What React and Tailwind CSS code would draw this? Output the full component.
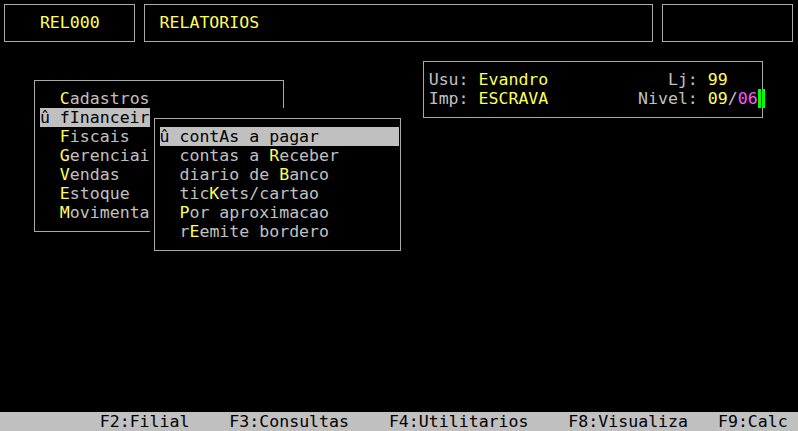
const Y = "text-[#ffff55]";

export default function App() {
  return (
    <div className="w-full h-screen bg-black overflow-hidden font-['DejaVu_Sans_Mono',monospace] text-[16.57px] leading-[19px] text-[#c0c0c0]">
      <div className="grid grid-cols-[repeat(80,9.975px)] grid-rows-[repeat(23,19px)] -mt-[6px] whitespace-pre">
        {/* header boxes */}
        <div className="col-start-1 col-span-14 row-start-1 row-span-3 ml-[4px] mr-[5px] mt-[10px] mb-[9px] border border-[#aaaaaa]" />
        <div className="col-start-15 col-span-52 row-start-1 row-span-3 ml-[4px] mr-[5px] mt-[10px] mb-[9px] border border-[#aaaaaa]" />
        <div className="col-start-67 col-span-14 row-start-1 row-span-3 ml-[4px] mr-[5px] mt-[10px] mb-[9px] border border-[#aaaaaa]" />
        <div className={"col-start-5 col-span-6 row-start-2 " + Y}>REL000</div>
        <div className={"col-start-17 col-span-10 row-start-2 " + Y}>RELATORIOS</div>

        {/* info box */}
        <div className="col-start-43 col-span-35 row-start-4 row-span-4 ml-[4px] mr-[5px] mt-[10px] mb-[9px] border border-[#aaaaaa]" />
        <div className="col-start-44 col-span-12 row-start-5">Usu: <span className={Y}>Evandro</span></div>
        <div className="col-start-68 col-span-6 row-start-5">Lj: <span className={Y}>99</span></div>
        <div className="col-start-44 col-span-12 row-start-6">Imp: <span className={Y}>ESCRAVA</span></div>
        <div className="col-start-65 col-span-12 row-start-6">
          Nivel: <span className={Y}>09</span>/<span className="text-[#ff55ff]">06</span>
        </div>
        <div className="col-start-77 row-start-6 flex pl-[0.5px]">
          <div className="w-[3px] bg-[#00ff00]" />
          <div className="w-[1px] bg-[#0a2a0a]" />
          <div className="w-[2.5px] bg-[#00ff00]" />
        </div>

        {/* main menu */}
        <div className="col-start-4 col-span-26 row-start-5 row-span-9 ml-[4px] mr-[5px] mt-[10px] mb-[9px] border border-[#aaaaaa]" />
        <div className="col-start-7 col-span-9 row-start-6"><span className={Y}>C</span>adastros</div>
        <div className="col-start-5 col-span-11 row-start-7 bg-[#c0c0c0] text-black">û fInanceir</div>
        <div className="col-start-7 col-span-9 row-start-8"><span className={Y}>F</span>iscais</div>
        <div className="col-start-7 col-span-9 row-start-9"><span className={Y}>G</span>erenciai</div>
        <div className="col-start-7 col-span-9 row-start-10"><span className={Y}>V</span>endas</div>
        <div className="col-start-7 col-span-9 row-start-11"><span className={Y}>E</span>stoque</div>
        <div className="col-start-7 col-span-9 row-start-12"><span className={Y}>M</span>ovimenta</div>

        {/* sub menu */}
        <div className="col-start-16 col-span-26 row-start-7 row-span-8 bg-black pl-[4px] pr-[8px] pt-[10px] pb-[9px]">
          <div className="h-full border border-[#aaaaaa]" />
        </div>
        <div className="col-start-17 col-span-24 row-start-8 bg-[#c0c0c0] text-black">û contAs a pagar</div>
        <div className="col-start-19 col-span-20 row-start-9">contas a <span className={Y}>R</span>eceber</div>
        <div className="col-start-19 col-span-20 row-start-10">diario de <span className={Y}>B</span>anco</div>
        <div className="col-start-19 col-span-20 row-start-11">tic<span className={Y}>K</span>ets/cartao</div>
        <div className="col-start-19 col-span-20 row-start-12"><span className={Y}>P</span>or aproximacao</div>
        <div className="col-start-19 col-span-20 row-start-13">r<span className={Y}>E</span>emite bordero</div>

        {/* bottom bar */}
        <div className="col-start-1 col-span-80 row-start-23 bg-[#c0c0c0] text-black">
          {"          F2:Filial    F3:Consultas    F4:Utilitarios    F8:Visualiza   F9:Calc"}
        </div>
      </div>
    </div>
  );
}
